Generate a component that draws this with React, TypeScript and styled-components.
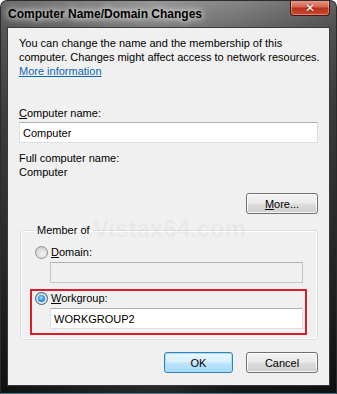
import React from 'react';
import styled, { createGlobalStyle, css } from 'styled-components';

const GlobalStyle = createGlobalStyle`
  html, body {
    margin: 0;
    padding: 0;
    background: #ffffff;
  }
  body {
    font-family: "Liberation Sans", Arial, sans-serif;
    font-size: 11px;
    color: #000;
  }
`;

const Window = styled.div`
  position: relative;
  width: 337px;
  height: 394px;
  box-sizing: border-box;
  display: flex;
  flex-direction: column;
  border-radius: 7px 7px 0 0;
  border: 1px solid #2b2b2b;
  border-bottom-color: #3f7f86;
  background:
    linear-gradient(to right, rgba(0, 0, 0, 0.25), rgba(255, 255, 255, 0.08) 45%, rgba(0, 0, 0, 0.05) 70%, rgba(0, 0, 0, 0.3)),
    linear-gradient(to bottom, #8e8e8e 0, #727272 26px, #525252 110px, #303030 280px, #161616 100%);
  overflow: hidden;
`;

const TitleBar = styled.div`
  height: 26px;
  display: flex;
  align-items: flex-start;
  justify-content: space-between;
  flex-shrink: 0;
`;

const Title = styled.div`
  padding: 6px 0 0 7px;
  font-size: 12px;
  font-weight: bold;
  color: #000;
  text-shadow: 0 0 6px rgba(255, 255, 255, 0.9), 0 0 10px rgba(255, 255, 255, 0.7);
`;

const CloseButton = styled.div`
  width: 40px;
  height: 16px;
  margin-right: 6px;
  margin-top: -1px;
  box-sizing: border-box;
  border: 1px solid #4b1410;
  border-top: none;
  border-radius: 0 0 4px 4px;
  background: linear-gradient(to bottom, #e8a08f 0%, #d5664f 45%, #b8321c 55%, #c84a2d 100%);
  box-shadow: inset 0 0 0 1px rgba(255, 255, 255, 0.35);
  display: flex;
  align-items: center;
  justify-content: center;
  color: #fff;
  font-weight: bold;
  font-size: 12px;
  font-family: "DejaVu Sans", sans-serif;
  text-shadow: 0 0 2px #5a1208;
`;

const Client = styled.div`
  position: relative;
  flex: 1;
  margin: 0 6px 7px 6px;
  background: #f0f0f0;
  border: 1px solid #3a3a3a;
  padding: 8px 11px 0 11px;
  display: flex;
  flex-direction: column;
`;

const Watermark = styled.div`
  position: absolute;
  left: 85px;
  top: 187px;
  font-size: 24px;
  font-weight: bold;
  color: rgba(0, 0, 0, 0.045);
  pointer-events: none;
`;

const Text = styled.div<{ $mt?: number }>`
  line-height: 14px;
  white-space: nowrap;
  margin-top: ${(p) => p.$mt ?? 0}px;
`;

const Link = styled.a`
  color: #0b66b8;
  text-decoration: underline;
`;

const TextBox = styled.div<{ $disabled?: boolean }>`
  height: 21px;
  box-sizing: border-box;
  border: 1px solid #dbdfe6;
  border-top-color: #abadb3;
  background: ${(p) => (p.$disabled ? '#f0f0f0' : '#ffffff')};
  ${(p) =>
    p.$disabled &&
    css`
      border-color: #c2c5ca;
      border-top-color: #adb2b5;
    `}
  padding: 0 3px;
  display: flex;
  align-items: center;
  line-height: 14px;
`;

const ButtonRow = styled.div<{ $mt: number }>`
  display: flex;
  justify-content: flex-end;
  gap: 13px;
  margin-top: ${(p) => p.$mt}px;
`;

const Button = styled.div<{ $primary?: boolean }>`
  width: 72px;
  height: 21px;
  box-sizing: border-box;
  border: 1px solid #707070;
  border-radius: 3px;
  display: flex;
  align-items: center;
  justify-content: center;
  background: linear-gradient(to bottom, #f2f2f2 0%, #ebebeb 48%, #dddddd 52%, #cfcfcf 100%);
  box-shadow: inset 0 0 0 1px rgba(255, 255, 255, 0.8);
  ${(p) =>
    p.$primary &&
    css`
      width: 69px;
      border-color: #3c7fb1;
      background: linear-gradient(to bottom, #eaf6fd 0%, #d9f0fc 48%, #bee6fd 52%, #a7d9f5 100%);
      box-shadow: inset 0 0 0 1px #9fe0ff;
    `}
`;

const Group = styled.fieldset`
  margin: 9px 0 0 1px;
  padding: 0 10px 4px 9px;
  border: 1px solid #d5dfe5;
  border-radius: 3px;
  box-shadow: inset 0 0 0 1px #ffffff;
  min-width: 0;
`;

const Legend = styled.legend`
  padding: 0 2px;
  margin-left: 5px;
  line-height: 14px;
`;

const Option = styled.div<{ $highlighted?: boolean }>`
  border: 2px solid ${(p) => (p.$highlighted ? '#d3202a' : 'transparent')};
  padding: 0 2px 4px 3px;
  margin-top: ${(p) => (p.$highlighted ? 0 : 6)}px;
`;

const RadioRow = styled.div`
  display: flex;
  align-items: center;
  gap: 3px;
  height: 14px;
`;

const Radio = styled.span<{ $checked?: boolean }>`
  width: 13px;
  height: 13px;
  box-sizing: border-box;
  border-radius: 50%;
  border: 1px solid #8e8f8f;
  background: radial-gradient(circle at 60% 65%, #f4f4f4 0%, #dcdcdc 55%, #c4c4c4 100%);
  display: flex;
  align-items: center;
  justify-content: center;
  ${(p) =>
    p.$checked &&
    css`
      border-color: #2c628b;
      &::after {
        content: '';
        width: 7px;
        height: 7px;
        border-radius: 50%;
        background: radial-gradient(circle at 45% 40%, #a6e4ff 0%, #3a9fe4 45%, #0f4f93 100%);
      }
    `}
`;

const OptionField = styled.div`
  margin: 3px 0 0 15px;
`;

export default function App() {
  return (
    <>
      <GlobalStyle />
      <Window>
        <TitleBar>
          <Title>Computer Name/Domain Changes</Title>
          <CloseButton>✕</CloseButton>
        </TitleBar>
        <Client>
          <Watermark>Vistax64.com</Watermark>
          <Text>
            You can change the name and the membership of this
            <br />
            computer. Changes might affect access to network resources.
            <br />
            <Link>More information</Link>
          </Text>

          <Text $mt={28}>
            <u>C</u>omputer name:
          </Text>
          <div style={{ marginTop: 2 }}>
            <TextBox>Computer</TextBox>
          </div>

          <Text $mt={8}>Full computer name:</Text>
          <Text>Computer</Text>

          <ButtonRow $mt={14}>
            <Button>
              <span>
                <u>M</u>ore...
              </span>
            </Button>
          </ButtonRow>

          <Group>
            <Legend>Member of</Legend>
            <Option>
              <RadioRow>
                <Radio />
                <span>
                  <u>D</u>omain:
                </span>
              </RadioRow>
              <OptionField>
                <TextBox $disabled />
              </OptionField>
            </Option>
            <Option $highlighted>
              <RadioRow>
                <Radio $checked />
                <span>
                  <u>W</u>orkgroup:
                </span>
              </RadioRow>
              <OptionField>
                <TextBox>WORKGROUP2</TextBox>
              </OptionField>
            </Option>
          </Group>

          <ButtonRow $mt={12}>
            <Button $primary>OK</Button>
            <Button>Cancel</Button>
          </ButtonRow>
        </Client>
      </Window>
    </>
  );
}
